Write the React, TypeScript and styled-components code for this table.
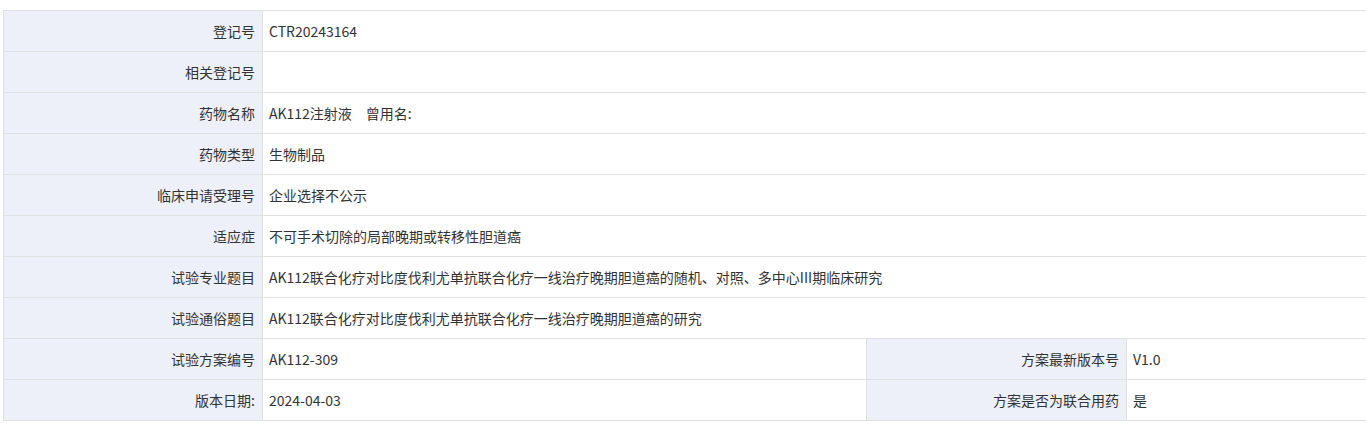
import React from "react";
import styled, { createGlobalStyle } from "styled-components";

const GlobalStyle = createGlobalStyle`
  body {
    margin: 0;
    background: #ffffff;
    font-family: "Microsoft YaHei", "Noto Sans CJK SC", sans-serif;
  }
`;

type Row =
  | { label: string; value: string }
  | { pair: [string, string, string, string] };

const rows: Row[] = [
  { label: "登记号", value: "CTR20243164" },
  { label: "相关登记号", value: "" },
  { label: "药物名称", value: "AK112注射液\u3000曾用名:" },
  { label: "药物类型", value: "生物制品" },
  { label: "临床申请受理号", value: "企业选择不公示" },
  { label: "适应症", value: "不可手术切除的局部晚期或转移性胆道癌" },
  {
    label: "试验专业题目",
    value: "AK112联合化疗对比度伐利尤单抗联合化疗一线治疗晚期胆道癌的随机、对照、多中心III期临床研究",
  },
  { label: "试验通俗题目", value: "AK112联合化疗对比度伐利尤单抗联合化疗一线治疗晚期胆道癌的研究" },
  { pair: ["试验方案编号", "AK112-309", "方案最新版本号", "V1.0"] },
  { pair: ["版本日期:", "2024-04-03", "方案是否为联合用药", "是"] },
];

export default function App() {
  return (
    <>
      <GlobalStyle />
      <Page>
        <InfoTable>
          <colgroup>
            <col style={{ width: 259 }} />
            <col style={{ width: 604 }} />
            <col style={{ width: 260 }} />
            <col />
          </colgroup>
          <tbody>
            {rows.map((row, i) =>
              "pair" in row ? (
                <tr key={i}>
                  <Label>{row.pair[0]}</Label>
                  <Value>{row.pair[1]}</Value>
                  <Label>{row.pair[2]}</Label>
                  <Value>{row.pair[3]}</Value>
                </tr>
              ) : (
                <tr key={i}>
                  <Label>{row.label}</Label>
                  <Value colSpan={3}>{row.value}</Value>
                </tr>
              )
            )}
          </tbody>
        </InfoTable>
      </Page>
    </>
  );
}

const Page = styled.div`
  padding: 10px 0 0 3px;
`;
const InfoTable = styled.table`
  width: 1364px;
  border-collapse: collapse;
  table-layout: fixed;
  font-size: 14px;
  color: #333333;
`;
const Label = styled.td`
  height: 41px;
  padding: 0 7px 0 0;
  box-sizing: border-box;
  text-align: right;
  background-color: #edf0f8;
  border: 1px solid #e0e0e0;
  white-space: nowrap;
`;
const Value = styled.td`
  height: 41px;
  padding: 0 0 0 6px;
  box-sizing: border-box;
  text-align: left;
  background-color: #ffffff;
  border: 1px solid #e0e0e0;
  white-space: nowrap;
`;
